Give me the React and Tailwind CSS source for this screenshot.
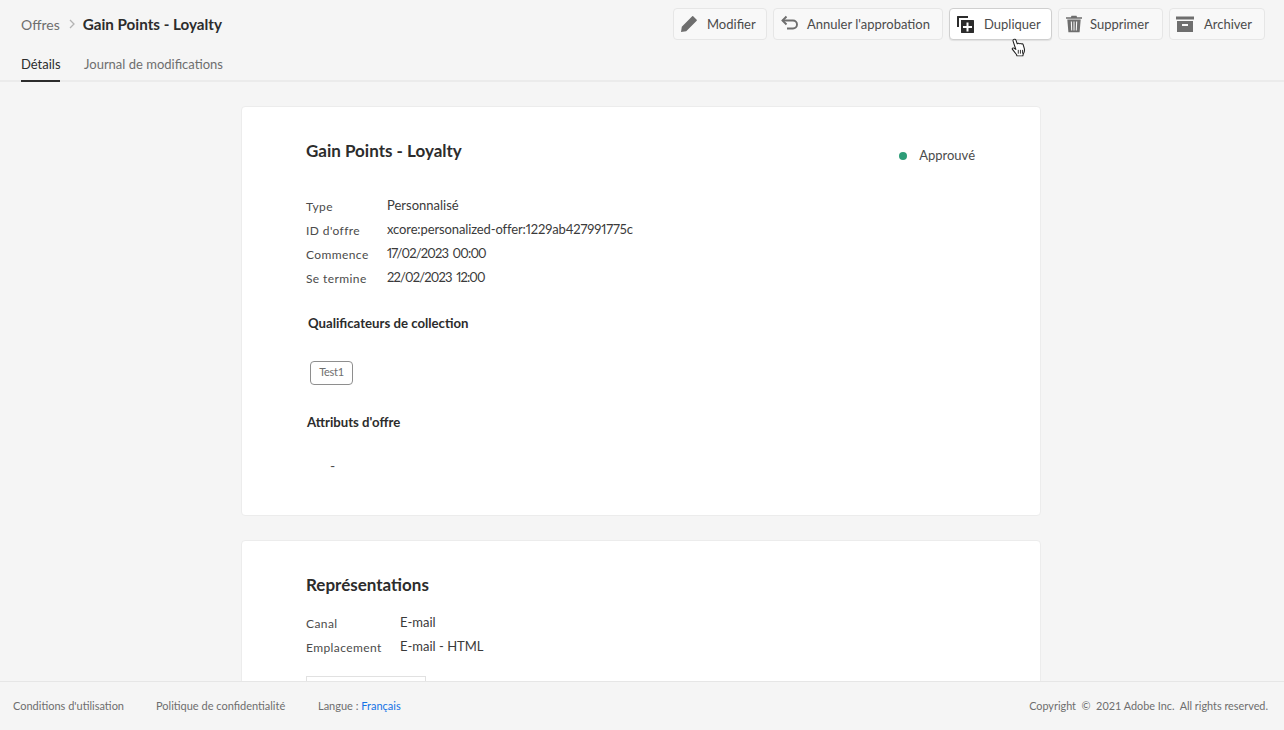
import React from "react";

function Pencil() {
  return (
    <svg width="18" height="18" viewBox="0 0 18 18" fill="#6e6e6e" className="shrink-0">
      <path d="M13.2 1.3 16.7 4.8a.7.7 0 0 1 0 1L6.200 16.200 1 17l.8-5.200L12.200 1.300a.7.7 0 0 1 1 0Z" />
    </svg>
  );
}
function Undo() {
  return (
    <svg width="18" height="18" viewBox="0 0 18 18" fill="none" stroke="#6e6e6e" strokeWidth="1.900" className="shrink-0">
      <path d="M1.500 5.500H12a4 4 0 0 1 4 4v0a4 4 0 0 1-4 4H6" />
      <path d="M5.500 1.500 1.500 5.500l4 4" />
    </svg>
  );
}
function Duplicate() {
  return (
    <svg width="18" height="18" viewBox="0 0 18 18" className="shrink-0">
      <path fill="#2c2c2c" d="M1 1.500C1 1.200 1.200 1 1.500 1H12v2H3v9H1V1.500Z" />
      <path fill="#2c2c2c" d="M5 5h12.500c.3 0 .5.2.5.5v12c0 .3-.2.5-.5.5h-12c-.3 0-.5-.2-.5-.5V5Z" />
      <path fill="#fff" d="M10.500 7.500h2v3.500H16v2h-3.500V16.500h-2V13H7v-2h3.500V7.500Z" />
    </svg>
  );
}
function Trash() {
  return (
    <svg width="18" height="18" viewBox="0 0 18 18" fill="#6e6e6e" className="shrink-0">
      <path d="M6.500 0.800h5l.6 1.500H17v1.400H1V2.300h4.900l.6-1.500Z" />
      <path fillRule="evenodd" d="M2.300 4.600h13.400L14.600 17.200H3.400L2.300 4.600ZM5.800 6.500l.4 9h1l-.3-9H5.800Zm2.700 0v9h1v-9h-1Zm2.600 0-.3 9h1l.4-9h-1.100Z" />
    </svg>
  );
}
function ArchiveBox() {
  return (
    <svg width="18" height="18" viewBox="0 0 18 18" fill="#6e6e6e" className="shrink-0">
      <rect x="0" y="1.500" width="18" height="3" />
      <path fillRule="evenodd" d="M1 6h16v11H1V6Zm5 3v2h6V9H6Z" />
    </svg>
  );
}

function ActionButton({ icon, label, active, width, labelLeft, iconLeft = 6 }) {
  return (
    <div
      className={
        "h-8 flex items-center rounded border text-[13px] text-[#4b4b4b] " +
        (active ? "bg-white border-[#cfcfcf] shadow-[0_1px_1px_rgba(0,0,0,0.08)]" : "bg-[#f8f8f8] border-[#e6e6e6]")
      }
      style={{ width }}
    >
      <div className="flex items-center shrink-0" style={{ width: labelLeft, paddingLeft: iconLeft }}>{icon}</div>
      <span className="pt-[2px]">{label}</span>
    </div>
  );
}

function Row({ label, value, labelWidth, tight }) {
  return (
    <div className="flex h-6 items-center">
      <span className="text-[12px] tracking-[0.4px] text-[#4b4b4b] pt-[6px]" style={{ width: labelWidth }}>{label}</span>
      <span className={"text-[13px] proportional-nums text-[#3a3a3a] pt-[4px] " + (tight === "date" ? "tracking-[-0.85px] [word-spacing:2px]" : tight === "id" ? "tracking-[-0.12px]" : "")}>
        {value}
      </span>
    </div>
  );
}

function HandCursor() {
  return (
    <svg width="17" height="19" viewBox="0 0 16 20" preserveAspectRatio="none" className="absolute left-[1010px] top-[38px] z-20">
      <path
        d="M3.500 1.500c.8-.6 1.800-.2 2.100.7l1.200 4c.3-.7 1.400-.8 1.900-.1.400-.6 1.500-.6 1.900.2.500-.4 1.400-.2 1.700.5l1.200 4.500c.4 2.200-.1 4-1 5.500l-.4 2H6.500l-.4-1.500-3.800-5.300c-.6-1 .5-2 1.400-1.400l1.800 1.500L2.900 3.300c-.2-.7 0-1.400.6-1.800Z"
        fill="#fff"
        stroke="#1f1f1f"
        strokeWidth="1"
        strokeLinejoin="round"
      />
      <path d="M7.800 12.500v4M9.800 12.500v4M11.800 12.500v4" stroke="#1f1f1f" strokeWidth="0.9" />
    </svg>
  );
}

export default function App() {
  return (
    <div className="relative h-[730px] w-[1284px] overflow-hidden flex flex-col bg-[#f5f5f5] font-['Lato','Noto_Sans',sans-serif] text-[#2c2c2c]">
      <header className="h-[82px] shrink-0 border-b-2 border-[#ebebeb] pl-[21px] pr-[19px] flex flex-col">
        <div className="flex items-start justify-between pt-2">
          <div className="flex items-center h-8">
            <span className="text-[#6e6e6e] text-[14px]">Offres</span>
            <svg width="8" height="10" viewBox="0 0 8 10" fill="none" stroke="#b3b3b3" strokeWidth="1.300" className="ml-[8px] mr-[7px]">
              <path d="M2 1l4 4-4 4" />
            </svg>
            <span className="font-bold text-[#2c2c2c] text-[15.2px]">Gain Points - Loyalty</span>
          </div>
          <div className="flex gap-[6px]">
            <ActionButton icon={<Pencil />} label="Modifier" width={94} labelLeft={33} />
            <ActionButton icon={<Undo />} label="Annuler l'approbation" width={170} labelLeft={33} iconLeft={7} />
            <ActionButton icon={<Duplicate />} label="Dupliquer" width={103} labelLeft={34} active />
            <ActionButton icon={<Trash />} label="Supprimer" width={105} labelLeft={31} />
            <ActionButton icon={<ArchiveBox />} label="Archiver" width={96} labelLeft={34} />
          </div>
        </div>
        <nav className="flex gap-6 mt-[6px] text-[13px] h-[34px]">
          <div className="relative h-full flex items-center pt-[4px] text-[#2c2c2c] w-[39px]">
            Détails
            <div className="absolute left-0 right-0 bottom-[-2px] h-[2px] bg-[#2c2c2c]" />
          </div>
          <div className="h-full flex items-center pt-[4px] text-[#6e6e6e]">Journal de modifications</div>
        </nav>
      </header>

      <main className="flex-1 overflow-hidden flex flex-col items-center pt-[25px] gap-[24px]">
        <section className="w-[800px] h-[410px] shrink-0 bg-white rounded border border-[#ececec] pl-[64px] pr-[65px] pt-[31px] ml-[-2px] -mt-px">
          <div className="flex justify-between items-start">
            <h1 className="text-[17px] font-bold leading-[26px] text-[#2c2c2c]">Gain Points - Loyalty</h1>
            <div className="flex items-center mt-[8px] text-[13px] text-[#4b4b4b]">
              <span className="w-2 h-2 rounded-full bg-[#2d9d78] mr-3" />
              Approuvé
            </div>
          </div>
          <div className="mt-[26px]">
            <Row label="Type" value="Personnalisé" labelWidth={81} />
            <Row label="ID d'offre" value="xcore:personalized-offer:1229ab427991775c" labelWidth={81} tight="id" />
            <Row label="Commence" value="17/02/2023 00:00" labelWidth={81} tight="date" />
            <Row label="Se termine" value="22/02/2023 12:00" labelWidth={81} tight="date" />
          </div>
          <h2 className="mt-[25px] ml-[2px] text-[13.2px] font-bold leading-[20px] text-[#2c2c2c]">Qualificateurs de collection</h2>
          <div className="mt-[28px] ml-[4px] w-[43px] h-6 rounded border border-[#8e8e8e] flex items-center justify-center text-[11px] tracking-[-0.3px] text-[#6e6e6e]">
            Test1
          </div>
          <h2 className="mt-[27px] ml-[1px] text-[13.2px] font-bold leading-[20px] text-[#2c2c2c]">Attributs d'offre</h2>
          <div className="mt-[24px] ml-[24px] text-[14px] leading-[20px] text-[#4b4b4b]">-</div>
        </section>

        <section className="w-[800px] h-[300px] shrink-0 bg-white rounded border border-[#ececec] pl-[64px] pr-[65px] pt-[31px] ml-[-2px]">
          <h1 className="text-[17px] font-bold leading-[26px] text-[#2c2c2c]">Représentations</h1>
          <div className="mt-[11px]">
            <Row label="Canal" value="E-mail" labelWidth={94} />
            <Row label="Emplacement" value="E-mail - HTML" labelWidth={94} />
          </div>
          <div className="mt-[19px] w-[120px] h-[60px] border border-[#e1e1e1] bg-white" />
        </section>
      </main>

      <footer className="h-[49px] shrink-0 z-10 border-t border-[#e6e6e6] bg-[#f5f5f5] flex items-center justify-between pl-[13px] pr-[16px] text-[11px] text-[#6e6e6e]">
        <div className="flex">
          <span className="w-[143px]">Conditions d'utilisation</span>
          <span className="w-[162px]">Politique de confidentialité</span>
          <span>
            Langue : <span className="text-[#1473e6]">Français</span>
          </span>
        </div>
        <span className="whitespace-pre text-[10.85px]">Copyright  ©  2021 Adobe Inc.  All rights reserved.</span>
      </footer>

      <HandCursor />
    </div>
  );
}
